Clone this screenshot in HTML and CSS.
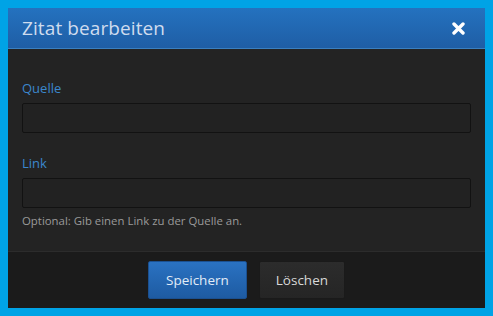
FILE: index.html
```html
<!DOCTYPE html>
<html lang="de">
<head>
<meta charset="utf-8">
<link rel="stylesheet" href="styles.css">
</head>
<body>
<div class="overlay">
  <div class="dialog">
    <div class="header">
      <h2 class="title">Zitat bearbeiten</h2>
      <span class="close" aria-label="Schließen">
        <svg width="13" height="13" viewBox="0 0 13 13"><path d="M2 2 L11 11 M11 2 L2 11" stroke="#fff" stroke-width="3.4" stroke-linecap="round"/></svg>
      </span>
    </div>
    <div class="body">
      <div class="field">
        <label class="label">Quelle</label>
        <div class="input"></div>
      </div>
      <div class="field">
        <label class="label">Link</label>
        <div class="input"></div>
        <div class="hint">Optional: Gib einen Link zu der Quelle an.</div>
      </div>
    </div>
    <div class="footer">
      <button class="btn primary">Speichern</button>
      <button class="btn">Löschen</button>
    </div>
  </div>
</div>
</body>
</html>
```
FILE: styles.css
```css
html, body { margin: 0; padding: 0; }
body {
  background: #00a3e6;
  font-family: "Open Sans", "Noto Sans", sans-serif;
  width: 493px; height: 316px; overflow: hidden;
}
.overlay { padding: 8px; }
.dialog {
  width: 477px;
  background: #232323;
  display: flex; flex-direction: column;
}
.header {
  height: 41px;
  box-sizing: border-box;
  background: linear-gradient(#2472bf, #1f5ea5);
  border-bottom: 1px solid #3a7fc0;
  display: flex; align-items: center; justify-content: space-between;
  padding: 0 20px 0 14px;
}
.title {
  margin: 0; font-weight: normal; font-size: 19px; color: #cfdcee;
  letter-spacing: 0.1px;
}
.close { display: flex; }
.body {
  padding: 30px 14px 20px;
  height: 203px; box-sizing: border-box;
  border-bottom: 1px solid #2c2c2c;
}
.field { display: flex; flex-direction: column; }
.field + .field { margin-top: 21px; }
.label { color: #3b87cc; font-size: 13px; line-height: 18px; margin-bottom: 6px; }
.input {
  height: 30px; box-sizing: border-box;
  background: #222; border: 1px solid #121212;
  border-radius: 2px;
}
.hint { color: #9a9a9a; font-size: 11.4px; margin-top: 5px; }
.footer {
  background: #1b1b1b;
  height: 56px;
  display: flex; justify-content: center; align-items: center; gap: 12px;
}
.btn {
  font-family: inherit; font-size: 13.5px;
  height: 38px; border-radius: 2px;
  border: 1px solid #1a1a1a;
  background: linear-gradient(#2c2c2c, #252525);
  color: #d8d8d8;
  padding: 0 16px;
}
.btn.primary {
  background: linear-gradient(#2a72c2, #1e5ba2);
  border-color: #1b5090;
  color: #e2ecf7;
  padding: 0 17px;
}
```
